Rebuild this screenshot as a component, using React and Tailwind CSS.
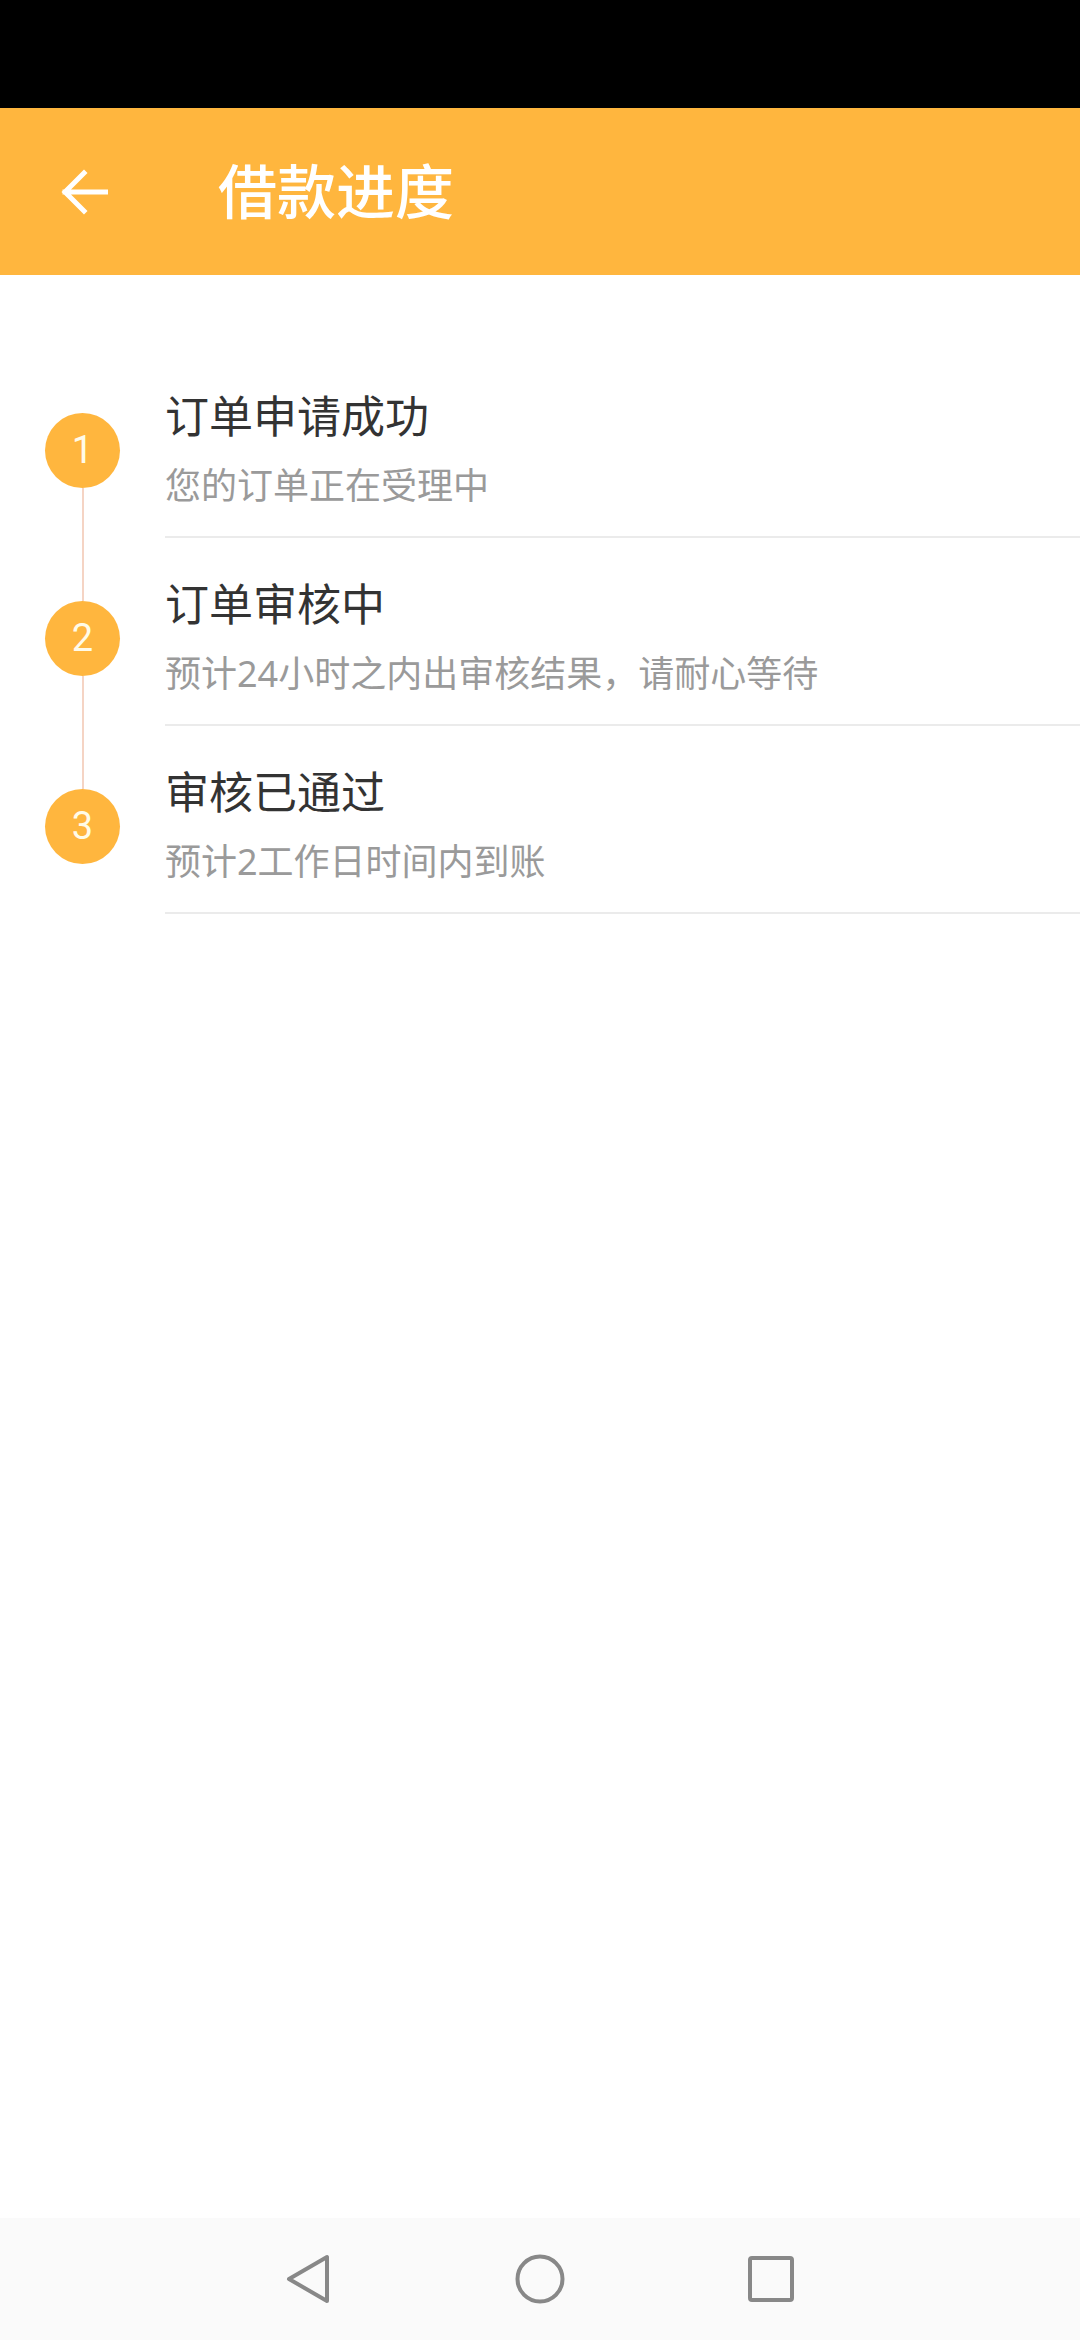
import { useMemo } from "react";

const steps = [
  { no: 1, title: "订单申请成功", desc: "您的订单正在受理中" },
  { no: 2, title: "订单审核中", desc: "预计24小时之内出审核结果，请耐心等待" },
  { no: 3, title: "审核已通过", desc: "预计2工作日时间内到账" },
];

const font = { fontFamily: '"Noto Sans", Roboto, "Noto Sans CJK SC", sans-serif' };

function StepRow({ step, first, last }) {
  return (
    <div className="flex">
      {/* timeline column */}
      <div className="flex w-[165px] shrink-0 flex-col items-center">
        <div
          className={
            "w-[2px] grow basis-[12px] " + (first ? "bg-transparent" : "bg-[#f5d4c4]")
          }
        />
        <div className="flex h-[75px] w-[75px] shrink-0 items-center justify-center rounded-full bg-[#ffb63e]">
          <span
            className="text-[38px] leading-none text-[#fffbe8]"
            style={{ fontFamily: 'Roboto, "Noto Sans", sans-serif' }}
          >
            {step.no}
          </span>
        </div>
        <div
          className={
            "w-[2px] grow basis-0 " + (last ? "bg-transparent" : "bg-[#f5d4c4]")
          }
        />
      </div>

      {/* text */}
      <div className="flex-1 border-b-2 border-[#ebebeb] pt-[37px] pb-[26px]">
        <div className="text-[44px] leading-[58px] text-[#333333]">{step.title}</div>
        <div className="mt-[17px] text-[36px] leading-[48px] text-[#9a9a9a]">
          {step.desc}
        </div>
      </div>
    </div>
  );
}

export default function App() {
  const rows = useMemo(() => steps, []);

  return (
    <div className="flex h-[2340px] w-[1080px] flex-col bg-white" style={font}>
      {/* status bar */}
      <div className="h-[108px] shrink-0 bg-black" />

      {/* header */}
      <div className="flex h-[167px] shrink-0 items-center bg-[#ffb63e]">
        <div className="flex w-[218px] items-center pl-[60px]">
          <svg viewBox="0 0 48 48" className="h-[48px] w-[48px]" fill="none">
            <path
              d="M46 24H5M24 5L5 24l19 19"
              stroke="white"
              strokeWidth="5"
              strokeLinecap="square"
            />
          </svg>
        </div>
        <h1 className="text-[59px] font-medium leading-none text-white">借款进度</h1>
      </div>

      {/* steps */}
      <div className="flex-1 pt-[75px]">
        {rows.map((s, i) => (
          <StepRow key={s.no} step={s} first={i === 0} last={i === rows.length - 1} />
        ))}
      </div>

      {/* nav bar */}
      <div className="flex h-[122px] shrink-0 items-center justify-center gap-[181px] bg-[#fafafa]">
        <svg viewBox="0 0 48 52" className="h-[52px] w-[48px]" fill="none">
          <path
            d="M42 4v44L4 26z"
            stroke="#888"
            strokeWidth="4"
            strokeLinejoin="round"
          />
        </svg>
        <svg viewBox="0 0 52 52" className="h-[52px] w-[52px]" fill="none">
          <circle cx="26" cy="26" r="22.5" stroke="#888" strokeWidth="4" />
        </svg>
        <svg viewBox="0 0 48 48" className="h-[48px] w-[48px]" fill="none">
          <rect x="3" y="3" width="42" height="42" rx="2" stroke="#888" strokeWidth="4" />
        </svg>
      </div>
    </div>
  );
}
